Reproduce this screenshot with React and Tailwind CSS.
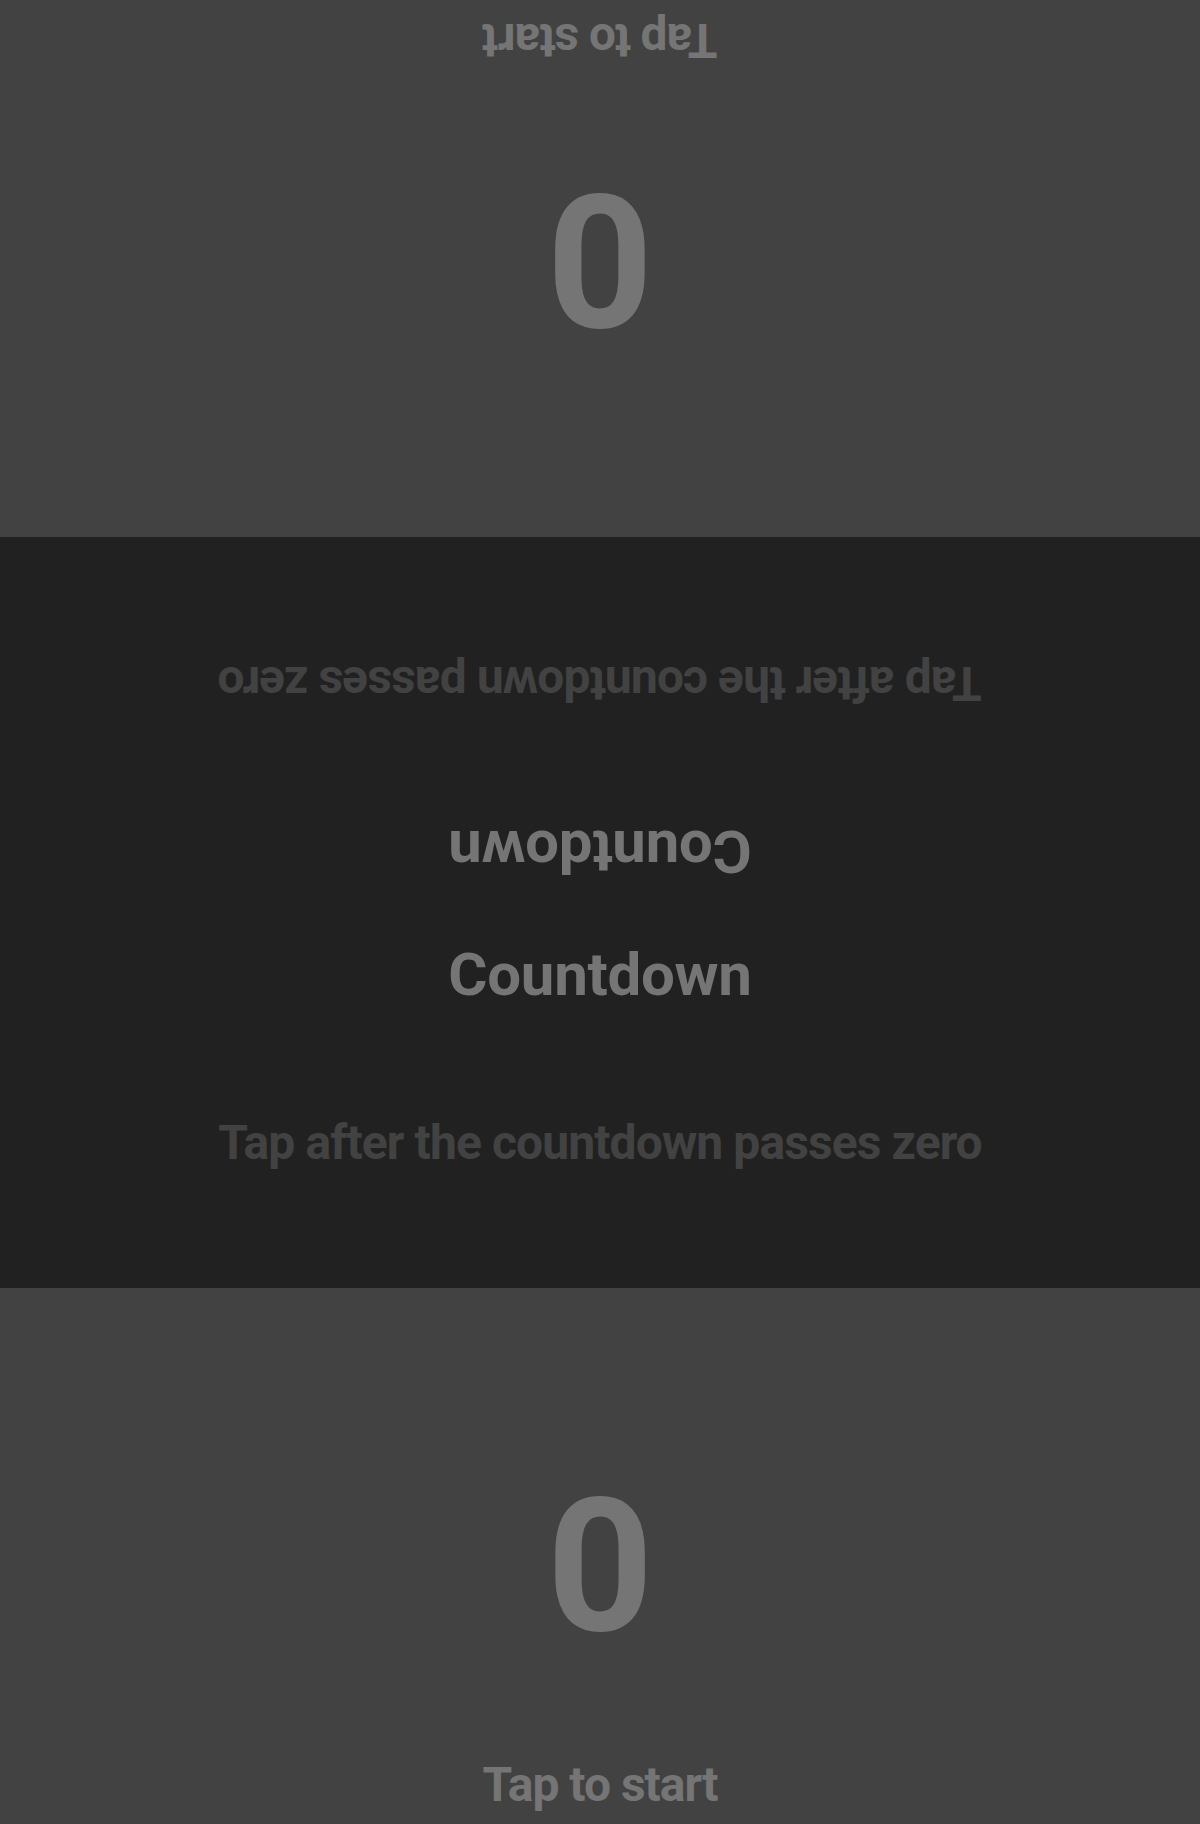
const font = { fontFamily: 'Roboto, "Noto Sans", sans-serif' };

function PlayerPanel({ flipped }) {
  return (
    <section
      className={`w-full bg-[#424242] flex flex-col items-center select-none ${flipped ? 'h-[537px] rotate-180' : 'h-[536px]'}`}
    >
      <div className="pt-[185px] text-[186px] leading-none font-bold text-[#757575]">0</div>
      <div className="mt-[102px] text-[48px] leading-none font-bold tracking-[-1px] text-[#757575]">Tap to start</div>
    </section>
  );
}

function Instructions({ flipped }) {
  return (
    <div className={`h-[375.5px] w-full flex flex-col items-center ${flipped ? 'rotate-180' : ''}`}>
      <h1 className="pt-[32px] text-[60px] leading-none font-bold tracking-[-0.3px] text-[#757575]">Countdown</h1>
      <p className="mt-[114px] text-[48px] leading-none font-bold tracking-[-0.9px] text-[#424242]">
        Tap after the countdown passes zero
      </p>
    </div>
  );
}

export default function App() {
  return (
    <main className="w-[1200px] h-[1824px] flex flex-col overflow-hidden bg-[#424242]" style={font}>
      <PlayerPanel flipped />
      <div className="h-[751px] w-full bg-[#212121] flex flex-col">
        <Instructions flipped />
        <Instructions />
      </div>
      <PlayerPanel />
    </main>
  );
}
